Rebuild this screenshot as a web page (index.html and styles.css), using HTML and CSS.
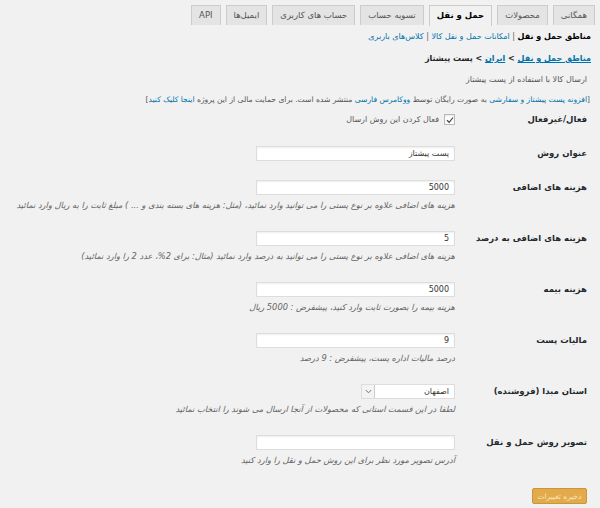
FILE: index.html
```html
<!DOCTYPE html>
<html lang="fa" dir="rtl">
<head>
    <meta charset="utf-8">
    <title>تنظیمات حمل و نقل</title>
    <link rel="stylesheet" href="styles.css">
</head>
<body>
    <div class="wrap">
        <nav class="nav-tabs">
            <a class="nav-tab" href="#">همگانی</a>
            <a class="nav-tab" href="#">محصولات</a>
            <a class="nav-tab active" href="#">حمل و نقل</a>
            <a class="nav-tab" href="#">تسویه حساب</a>
            <a class="nav-tab" href="#">حساب های کاربری</a>
            <a class="nav-tab" href="#">ایمیل‌ها</a>
            <a class="nav-tab" href="#">API</a>
        </nav>

        <ul class="subsubsub">
            <li><span class="current">مناطق حمل و نقل</span> | </li>
            <li><a href="#">امکانات حمل و نقل کالا</a> | </li>
            <li><a href="#">کلاس‌های باربری</a></li>
        </ul>

        <h3 class="crumbs"><a href="#">مناطق حمل و نقل</a> &gt; <a href="#">ایران</a> &gt; پست پیشتاز</h3>

        <p class="intro">ارسال کالا با استفاده از پست پیشتاز</p>
        <p class="notice">[<a href="#">افزونه پست پیشتاز و سفارشی</a> به صورت رایگان توسط <a href="#">ووکامرس فارسی</a> منتشر شده است. برای حمایت مالی از این پروژه <a href="#">اینجا کلیک کنید</a>]</p>

        <form class="form-table">
            <div class="row row-check">
                <div class="th">فعال/غیرفعال</div>
                <div class="td">
                    <label class="check-label">
                        <span class="checkbox">
                            <svg width="8" height="8" viewBox="0 0 8 8"><path d="M1 4.2 L3.2 6.3 L7 1.5" fill="none" stroke="#444" stroke-width="1.2"/></svg>
                        </span>
                        فعال کردن این روش ارسال
                    </label>
                </div>
            </div>

            <div class="row">
                <div class="th">عنوان روش</div>
                <div class="td"><input class="field" type="text" value="پست پیشتاز"></div>
            </div>

            <div class="row">
                <div class="th">هزینه های اضافی</div>
                <div class="td">
                    <input class="field" type="text" value="5000">
                    <p class="desc">هزینه های اضافی علاوه بر نوع پستی را می توانید وارد نمائید، (مثل: هزینه های بسته بندی و ... ) مبلغ ثابت را به ریال وارد نمائید</p>
                </div>
            </div>

            <div class="row">
                <div class="th">هزینه های اضافی به درصد</div>
                <div class="td">
                    <input class="field" type="text" value="5">
                    <p class="desc">هزینه های اضافی علاوه بر نوع پستی را می توانید به درصد وارد نمائید (مثال: برای 2%، عدد 2 را وارد نمائید)</p>
                </div>
            </div>

            <div class="row">
                <div class="th">هزینه بیمه</div>
                <div class="td">
                    <input class="field" type="text" value="5000">
                    <p class="desc">هزینه بیمه را بصورت ثابت وارد کنید، پیشفرض : 5000 ریال</p>
                </div>
            </div>

            <div class="row">
                <div class="th">مالیات پست</div>
                <div class="td">
                    <input class="field" type="text" value="9">
                    <p class="desc">درصد مالیات اداره پست، پیشفرض : 9 درصد</p>
                </div>
            </div>

            <div class="row">
                <div class="th">استان مبدا (فروشنده)</div>
                <div class="td">
                    <div class="select">
                        <span class="select-value">اصفهان</span>
                        <span class="select-arrow">
                            <svg width="7" height="5" viewBox="0 0 7 5"><path d="M0.8 1 L3.5 3.8 L6.2 1" fill="none" stroke="#777" stroke-width="1"/></svg>
                        </span>
                    </div>
                    <p class="desc">لطفا در این قسمت استانی که محصولات از آنجا ارسال می شوند را انتخاب نمائید</p>
                </div>
            </div>

            <div class="row">
                <div class="th">تصویر روش حمل و نقل</div>
                <div class="td">
                    <input class="field" type="text" value="">
                    <p class="desc">آدرس تصویر مورد نظر برای این روش حمل و نقل را وارد کنید</p>
                </div>
            </div>

            <div class="submit">
                <button class="button-primary" type="button">ذخیره تغییرات</button>
            </div>
        </form>
    </div>
</body>
</html>
```

FILE: styles.css
```css
* {
    padding: 0;
    margin: 0;
    box-sizing: border-box;
}
body {
    width: 100%;
    min-height: 100vh;
    background-color: #f1f1f1;
    color: #444;
    font-family: "DejaVu Sans", sans-serif;
    font-size: 8px;
    direction: rtl;
}
a {
    color: #0073aa;
    text-decoration: none;
}
.wrap {
    padding: 5px 5px 0 0;
}

/* tabs */
.nav-tabs {
    display: flex;
    gap: 5px;
    height: 20px;
}
.nav-tab {
    display: block;
    height: 20px;
    line-height: 18px;
    padding: 0 7px;
    background-color: #e4e4e4;
    border: 1px solid #ccc;
    border-bottom: none;
    color: #555;
    font-size: 8.5px;
}
.nav-tab.active {
    background-color: #f1f1f1;
    color: #000;
    font-weight: bold;
    height: 21px;
}

/* sub links */
.subsubsub {
    list-style: none;
    display: flex;
    margin: 6px 4px 0 0;
    line-height: 12px;
    color: #666;
}
.subsubsub li {
    white-space: pre;
}
.subsubsub .current {
    color: #000;
    font-weight: bold;
}

.crumbs {
    margin: 10px 4px 0 0;
    font-size: 8px;
    line-height: 12px;
    color: #222;
}
.crumbs a {
    text-decoration: underline;
}

.intro {
    margin: 9px 8px 0 0;
    line-height: 12px;
    color: #555;
}
.notice {
    margin: 8px 5px 0 0;
    line-height: 12px;
    font-size: 7.6px;
    color: #555;
}

/* settings table */
.form-table {
    margin: 0 8px 0 0;
}
.row {
    display: flex;
    padding: 10px 0 9px;
}
.row-check {
    padding-top: 6px;
}
.th {
    width: 132px;
    flex-shrink: 0;
    line-height: 15px;
    font-size: 8.5px;
    font-weight: bold;
    color: #23282d;
}
.td {
    flex: 1;
}
.field {
    display: block;
    width: 199px;
    height: 15px;
    padding: 0 5px;
    border: 1px solid #ddd;
    background-color: #fff;
    box-shadow: inset 0 1px 2px rgba(0, 0, 0, 0.07);
    font-family: "DejaVu Sans", sans-serif;
    font-size: 8px;
    color: #333;
    direction: rtl;
    outline: none;
}
.desc {
    margin-top: 3px;
    line-height: 14px;
    font-size: 8.3px;
    font-style: italic;
    color: #666;
    white-space: nowrap;
}

.check-label {
    display: flex;
    align-items: center;
    gap: 5px;
    height: 15px;
    color: #555;
}
.checkbox {
    display: flex;
    align-items: center;
    justify-content: center;
    width: 11px;
    height: 11px;
    border: 1px solid #b4b9be;
    background-color: #fff;
    box-shadow: inset 0 1px 2px rgba(0, 0, 0, 0.1);
}

.select {
    display: flex;
    align-items: center;
    width: 94px;
    height: 15px;
    border: 1px solid #ddd;
    background-color: #fff;
}
.select-value {
    flex: 1;
    padding-right: 5px;
    color: #333;
}
.select-arrow {
    display: flex;
    align-items: center;
    justify-content: center;
    width: 13px;
    height: 13px;
    border-right: 1px solid #ccc;
    background-color: #f3f3f3;
}

.submit {
    padding-top: 12px;
}
.button-primary {
    width: 55px;
    height: 16px;
    background-color: #e2aa4a;
    border: 1px solid #c9963a;
    border-radius: 2px;
    color: #f9e6c2;
    font-family: "DejaVu Sans", sans-serif;
    font-size: 7.5px;
    cursor: pointer;
}
```
